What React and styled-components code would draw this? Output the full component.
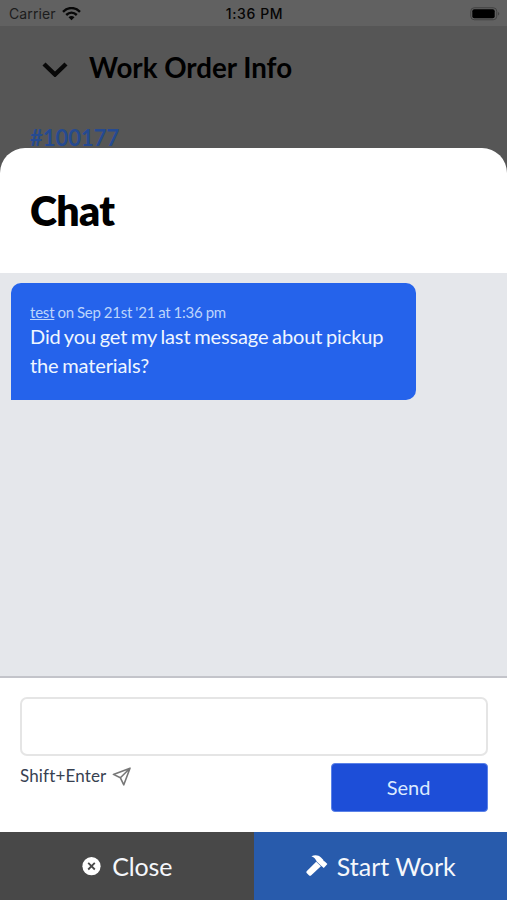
import React from 'react';
import styled, { createGlobalStyle } from 'styled-components';

const GlobalStyle = createGlobalStyle`
  * {
    box-sizing: border-box;
  }
  body {
    margin: 0;
    font-family: Lato, sans-serif;
    background: #565656;
  }
`;

const Screen = styled.div`
  position: relative;
  height: 900px;
  overflow: hidden;
  display: flex;
  flex-direction: column;
  background: #565656;
`;

const StatusBar = styled.header`
  height: 26px;
  padding: 1px 7px 0 9px;
  display: grid;
  grid-template-columns: 1fr auto 1fr;
  align-items: center;
  background: #616161;
  color: #050505;
  font: 500 14px/26px Inter, sans-serif;
`;

const Carrier = styled.div`
  display: flex;
  align-items: center;
  gap: 6px;
  color: #1c1c1c;
  font-weight: 400;
  letter-spacing: 0.1px;
`;

const Clock = styled.div`
  font-weight: 500;
  letter-spacing: 0.6px;
`;

const Battery = styled.svg`
  justify-self: end;
`;

const PageHeader = styled.div`
  height: 84px;
  padding: 0 42px;
  display: flex;
  align-items: center;
  gap: 21px;
`;

const PageTitle = styled.h2`
  margin: 0;
  font-size: 27.7px;
  font-weight: 700;
  line-height: 34px;
`;

const OrderNumber = styled.div`
  padding: 12px 30px 0;
  color: #254a91;
  font-size: 22px;
  line-height: 32px;
  font-weight: 700;
`;

const Sheet = styled.section`
  position: absolute;
  top: 148px;
  right: 0;
  bottom: 0;
  left: 0;
  display: flex;
  flex-direction: column;
  overflow: hidden;
  border-radius: 25px 25px 0 0;
  background: #fff;
`;

const SheetTitle = styled.h1`
  height: 125px;
  margin: 0;
  padding: 0 30px;
  font-size: 41px;
  font-weight: 800;
  letter-spacing: -0.6px;
  line-height: 126px;
`;

const Messages = styled.div`
  flex: 1;
  padding: 10px 11px;
  background: #e5e7eb;
`;

const Bubble = styled.article`
  width: 405px;
  height: 117px;
  padding: 19px 19px;
  border-radius: 10px 10px 10px 0;
  background: #2563eb;
  color: #eff6ff;
`;

const Meta = styled.div`
  color: #bcd5fc;
  font-size: 15px;
  letter-spacing: -0.2px;
  word-spacing: -0.6px;
  line-height: 20px;
`;

const Message = styled.p`
  margin: 0;
  font-size: 20px;
  letter-spacing: -0.12px;
  word-spacing: -1.3px;
  line-height: 29px;
`;

const Composer = styled.form`
  height: 156px;
  padding: 19px 19px 0 20px;
  border-top: 2px solid #c3c4ca;
`;

const Input = styled.textarea`
  display: block;
  width: 100%;
  height: 59px;
  border: 2px solid #e5e5e5;
  border-radius: 7px;
  outline: none;
  resize: none;
  background: #fff;
`;

const ComposerRow = styled.div`
  display: flex;
  justify-content: space-between;
  padding-top: 7px;
`;

const Hint = styled.div`
  display: flex;
  height: 25px;
  align-items: center;
  gap: 6px;
  color: #374151;
  font-size: 17px;
  letter-spacing: 0.15px;
`;

const SendButton = styled.button`
  width: 157px;
  height: 49px;
  padding: 0 2px 1px 0;
  border: 1px solid #5b82e8;
  border-radius: 4px;
  background: #1d4ed8;
  color: #dbeafe;
  font: 20px Lato, sans-serif;
`;

const Actions = styled.footer`
  display: flex;
  height: 68px;
`;

const Action = styled.button`
  flex: 1;
  display: flex;
  align-items: center;
  justify-content: center;
  gap: ${({ $gap }) => $gap};
  padding: 0 0 0 1px;
  border: 0;
  background: ${({ $color }) => $color};
  color: #f5f7fb;
  font: 25px Lato, sans-serif;
  letter-spacing: ${({ $spacing }) => $spacing || 0};
`;

const WifiIcon = () => (
  <svg width="19" height="14" viewBox="0 0 19 14" fill="none" stroke="#080808" strokeWidth="2.4">
    <path d="M1 4.8C6-.2 13-.2 18 4.8M4.2 8c3.2-3 7.4-3 10.6 0" />
    <path d="M6.5 10.2c1.8-1.5 4.2-1.5 6 0l-3 3z" fill="#080808" stroke="none" />
  </svg>
);

const BatteryIcon = () => (
  <Battery width="30" height="14" viewBox="0 0 30 14">
    <rect x=".75" y=".75" width="26" height="12" rx="3.5" fill="none" stroke="#424242" />
    <rect x="2.3" y="2.3" width="22.4" height="8.9" rx="2" fill="#000" />
    <path d="M28 5c1.8.7 1.8 2.8 0 3.5z" fill="#424242" />
  </Battery>
);

const PlaneIcon = () => (
  <svg width="20" height="20" viewBox="0 0 20 20" fill="none" stroke="#777" strokeWidth="1.6" strokeLinejoin="round">
    <path d="M1.4 8.4 18 2.2 11.8 18.8 8.4 11.8zM8.4 11.8 18 2.2" />
  </svg>
);

const CloseIcon = () => (
  <svg width="19" height="19" viewBox="0 0 19 19">
    <circle cx="9.5" cy="9.2" r="9.1" fill="#fff" />
    <path d="m6.2 5.9 6.6 6.6m0-6.6-6.6 6.6" stroke="#484848" strokeWidth="1.8" />
  </svg>
);

const HammerIcon = () => (
  <svg width="22" height="22" viewBox="0 0 22 22" fill="#fff">
    <path d="M5.4 1.2C9-.2 12.6.1 15 2.5l2.2 2.2c.2.9.4 1.5 1.3 1.5l2.9 2.8-3.6 3.9-3.2-2.7-3.7-3.4C9.900 4.500 8.400 2.300 5.400 1.200z" />
    <path d="m10.200 6.700 4.700 4.500-9.600 9.100c-.8.7-1.700.7-2.400 0L.9 18.300c-.7-.7-.7-1.700 0-2.400z" />
  </svg>
);

const App = () => (
  <>
    <GlobalStyle />
    <Screen>
      <StatusBar>
        <Carrier>Carrier <WifiIcon /></Carrier>
        <Clock>1:36 PM</Clock>
        <BatteryIcon />
      </StatusBar>
      <PageHeader>
        <svg width="26" height="18" viewBox="0 0 26 18" fill="none" stroke="#080808" strokeWidth="4.4">
          <path d="m2 5 11 10.500L24 5" />
        </svg>
        <PageTitle>Work Order Info</PageTitle>
      </PageHeader>
      <OrderNumber>#100177</OrderNumber>

      <Sheet>
        <SheetTitle>Chat</SheetTitle>
        <Messages>
          <Bubble>
            <Meta><u>test</u> on Sep 21st '21 at 1:36 pm</Meta>
            <Message>Did you get my last message about pickup the materials?</Message>
          </Bubble>
        </Messages>
        <Composer>
          <Input />
          <ComposerRow>
            <Hint>Shift+Enter <PlaneIcon /></Hint>
            <SendButton type="button">Send</SendButton>
          </ComposerRow>
        </Composer>
        <Actions>
          <Action $color="#484848" $gap="11px" $spacing="-0.2px"><CloseIcon />Close</Action>
          <Action $color="#285bac" $gap="9px"><HammerIcon />Start Work</Action>
        </Actions>
      </Sheet>
    </Screen>
  </>
);

export default App;
